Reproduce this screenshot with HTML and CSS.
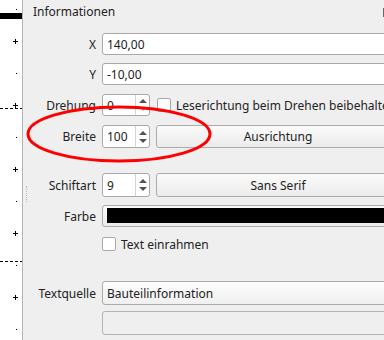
FILE: index.html
```html
<!DOCTYPE html>
<html>
<head>
<meta charset="utf-8">
<link rel="stylesheet" href="styles.css">
</head>
<body>
<div class="app">
  <svg class="canvas" width="22" height="340" viewBox="0 0 22 340">
    <rect x="0" y="13" width="22" height="6" fill="#000"/>
    <g stroke="#000" stroke-width="1">
      <line x1="0" y1="108.5" x2="22" y2="108.5" stroke-dasharray="3 2"/>
      <line x1="0" y1="261.5" x2="22" y2="261.5" stroke-dasharray="3 2"/>
      <path d="M13 41.5h5M15.5 39v5"/>
      <path d="M13 105.5h5M15.5 103v5"/>
      <path d="M13 169.5h5M15.5 167v5"/>
      <path d="M13 233.5h5M15.5 231v5"/>
      <path d="M13 297.5h5M15.5 295v5"/>
    </g>
    <g fill="#000">
      <rect x="16" y="9" width="1" height="1"/>
      <rect x="16" y="73" width="1" height="1"/>
      <rect x="16" y="137" width="1" height="1"/>
      <rect x="16" y="201" width="1" height="1"/>
      <rect x="16" y="265" width="1" height="1"/>
      <rect x="16" y="329" width="1" height="1"/>
    </g>
  </svg>
  <div class="splitter"><span class="grip"></span></div>
  <div class="panel">
    <div class="header"><span>Informationen</span><span class="cut"></span></div>

    <div class="row h22 mt0">
      <span class="lbl">X</span>
      <div class="input">140,00</div>
    </div>
    <div class="row h22 mt8">
      <span class="lbl">Y</span>
      <div class="input">-10,00</div>
    </div>
    <div class="row h22 mt9">
      <span class="lbl">Drehung</span>
      <div class="spin">
        <span class="spin-val">0</span>
        <span class="spin-btns"><i class="up"></i><i class="down dis"></i></span>
      </div>
      <span class="check"></span>
      <span class="ctext">Leserichtung beim Drehen beibehalten</span>
    </div>
    <div class="row h23 mt9">
      <span class="lbl">Breite</span>
      <div class="spin">
        <span class="spin-val">100</span>
        <span class="spin-btns"><i class="up"></i><i class="down"></i></span>
      </div>
      <div class="button">Ausrichtung</div>
    </div>
    <div class="row h24 mt25">
      <span class="lbl">Schiftart</span>
      <div class="spin">
        <span class="spin-val">9</span>
        <span class="spin-btns"><i class="up"></i><i class="down"></i></span>
      </div>
      <div class="button">Sans Serif</div>
    </div>
    <div class="row h22 mt8">
      <span class="lbl">Farbe</span>
      <div class="colorbtn"><span class="swatch"></span></div>
    </div>
    <div class="row h18 mt8">
      <span class="lbl"></span>
      <span class="check first"></span>
      <span class="ctext">Text einrahmen</span>
    </div>
    <div class="row h24 mt28">
      <span class="lbl">Textquelle</span>
      <div class="combo">Bauteilinformation</div>
    </div>
    <div class="row h24 mt6">
      <span class="lbl"></span>
      <div class="disabled"></div>
    </div>
  </div>
  <svg class="annot" width="384" height="340" viewBox="0 0 384 340">
    <ellipse cx="119" cy="134" rx="91" ry="27" fill="none" stroke="#ff0000" stroke-width="3"/>
  </svg>
</div>
</body>
</html>
```
FILE: styles.css
```css
html, body {
  margin: 0;
  padding: 0;
  overflow: hidden;
  background: #efefef;
}
.app {
  position: relative;
  display: flex;
  width: 400px;
  height: 340px;
  overflow: hidden;
  font-family: "Noto Sans", "DejaVu Sans", sans-serif;
  font-size: 12px;
  color: #222;
}
.canvas {
  display: block;
  flex: 0 0 22px;
  background: #fff;
}
.splitter {
  flex: 0 0 10px;
  box-sizing: border-box;
  border-left: 1px solid #b4b4b4;
  display: flex;
  flex-direction: column;
}
.grip {
  display: block;
  margin-top: 186px;
  margin-left: 3px;
  width: 0;
  height: 16px;
  border-left: 1px dotted #b8b8b8;
}
.panel {
  flex: 1;
  display: flex;
  flex-direction: column;
}
.header {
  display: flex;
  height: 16px;
  line-height: 16px;
  padding-top: 4px;
  margin-bottom: 13px;
  padding-left: 1px;
}
.cut {
  margin-left: auto;
  margin-right: 16px;
  margin-top: 4px;
  width: 1px;
  height: 9px;
  background: #666;
}
.row {
  display: flex;
  align-items: center;
  gap: 6px;
}
.h18 { height: 18px; }
.h22 { height: 22px; }
.h23 { height: 23px; }
.h24 { height: 24px; }
.mt0 { margin-top: 0; }
.mt6 { margin-top: 6px; }
.mt8 { margin-top: 8px; }
.mt9 { margin-top: 9px; }
.mt25 { margin-top: 25px; }
.mt28 { margin-top: 28px; }
.lbl {
  flex: 0 0 64px;
  text-align: right;
  white-space: nowrap;
}
.input {
  flex: 1;
  align-self: stretch;
  box-sizing: border-box;
  background: #fff;
  border: 1px solid #a9a9a9;
  border-radius: 3px;
  padding-left: 4px;
  display: flex;
  align-items: center;
}
.spin {
  flex: 0 0 48px;
  align-self: stretch;
  box-sizing: border-box;
  background: #fff;
  border: 1px solid #a9a9a9;
  border-radius: 3px;
  display: flex;
}
.spin-val {
  flex: 1;
  padding-left: 4px;
  display: flex;
  align-items: center;
}
.spin-btns {
  flex: 0 0 13px;
  border-left: 1px solid #d4d4d4;
  display: flex;
  flex-direction: column;
  justify-content: center;
  align-items: center;
  gap: 4px;
}
.spin-btns i {
  display: block;
  width: 0;
  height: 0;
  border-left: 4px solid transparent;
  border-right: 4px solid transparent;
}
.spin-btns .up { border-bottom: 4px solid #505050; }
.spin-btns .down { border-top: 4px solid #505050; }
.spin-btns .down.dis { border-top-color: #b0b0b0; }
.check {
  flex: 0 0 14px;
  height: 14px;
  box-sizing: border-box;
  background: #fff;
  border: 1px solid #a9a9a9;
  border-radius: 2px;
  margin-left: 1px;
}
.check.first { margin-left: 0; }
.ctext {
  white-space: nowrap;
  margin-left: -1px;
}
.button {
  flex: 1;
  align-self: stretch;
  box-sizing: border-box;
  border: 1px solid #ababab;
  border-radius: 3px;
  background: linear-gradient(#fbfbfb, #ebebeb);
  display: flex;
  align-items: center;
  justify-content: center;
}
.colorbtn {
  flex: 1;
  align-self: stretch;
  box-sizing: border-box;
  border: 1px solid #ababab;
  border-radius: 3px;
  background: linear-gradient(#fbfbfb, #ebebeb);
  padding: 2px 0 3px 4px;
  display: flex;
}
.swatch {
  flex: 1;
  background: #000;
}
.combo {
  flex: 1;
  align-self: stretch;
  box-sizing: border-box;
  border: 1px solid #ababab;
  border-radius: 3px;
  background: linear-gradient(#fdfdfd, #f0f0f0);
  padding-left: 4px;
  display: flex;
  align-items: center;
}
.disabled {
  flex: 1;
  align-self: stretch;
  box-sizing: border-box;
  border: 1px solid #b4b4b4;
  border-radius: 3px;
  background: #efefef;
}
.annot {
  position: absolute;
  left: 0;
  top: 0;
  pointer-events: none;
}
```
